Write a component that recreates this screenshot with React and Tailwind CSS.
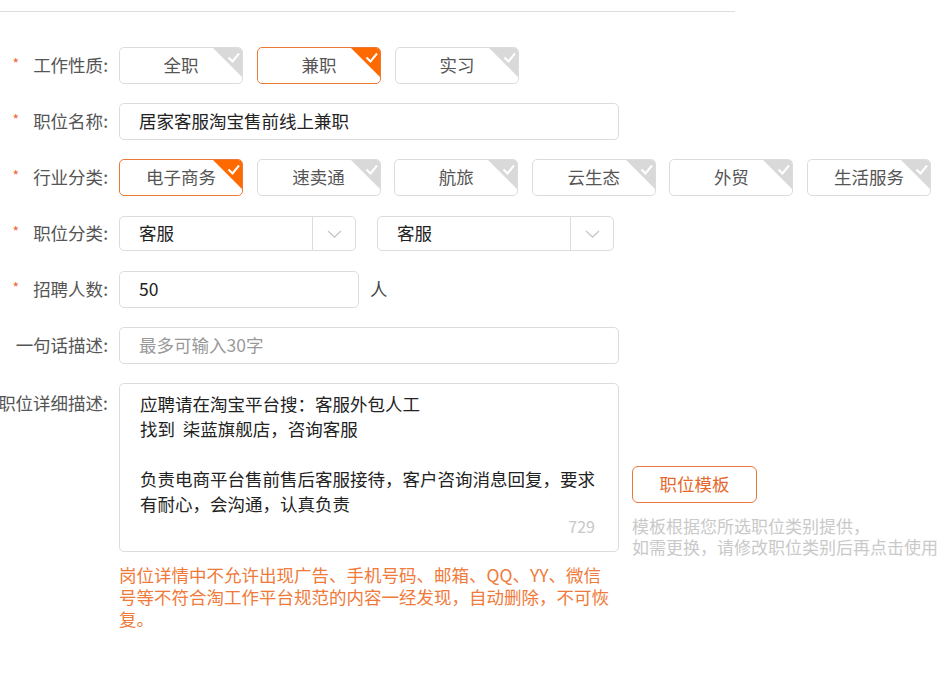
import { useState } from 'react';

const font = { fontFamily: '"Noto Sans CJK SC", "Noto Sans", sans-serif' };

const Corner = ({ active }) => (
  <svg width="29" height="29" viewBox="0 0 29 29" className="absolute top-0 right-0">
    <polygon points="0,0 29,0 29,29" fill={active ? '#ff6a00' : '#d9d9d9'} />
    <path d="M15.5 9.5 L19.5 13.5 L26 5.5" fill="none" stroke="#fff" strokeWidth="2" />
  </svg>
);

const Chip = ({ label, active, onClick }) => (
  <button
    onClick={onClick}
    className={`relative w-[124px] h-[37px] shrink-0 overflow-hidden rounded-[5px] border bg-white text-[17.5px] text-[#555] ${active ? 'border-[#ec7a35]' : 'border-[#dcdcdc]'}`}
  >
    {label}
    <Corner active={active} />
  </button>
);

const Label = ({ required, children }) => (
  <div className="w-[108px] shrink-0 flex items-center justify-end text-[17.5px] text-[#555] whitespace-nowrap">
    {required && <span className="text-[#f0673a] text-[14px] mr-[14px] -mt-1">*</span>}
    <span>{children}:</span>
  </div>
);

const Select = ({ value }) => (
  <div className="flex w-[237px] h-[35px] rounded-[5px] border border-[#dcdcdc] bg-white">
    <div className="flex-1 flex items-center pl-[19px] text-[17.5px] text-[#222]">{value}</div>
    <div className="w-[43px] border-l border-[#dcdcdc] flex items-center justify-center">
      <svg width="15" height="8" viewBox="0 0 15 8">
        <path d="M1 1 L7.5 7 L14 1" fill="none" stroke="#c8c8c8" strokeWidth="1.3" />
      </svg>
    </div>
  </div>
);

export default function App() {
  const [nature, setNature] = useState('兼职');
  const [industry, setIndustry] = useState('电子商务');

  const natures = ['全职', '兼职', '实习'];
  const industries = ['电子商务', '速卖通', '航旅', '云生态', '外贸', '生活服务'];

  return (
    <div className="w-[945px] h-[690px] bg-white overflow-hidden" style={font}>
      <div className="w-[735px] h-[12px] border-b border-[#dedede]" />

      <div className="flex flex-col gap-[19px] pt-[35px]">
        {/* 工作性质 */}
        <div className="flex items-center h-[37px] gap-[11px]">
          <Label required>工作性质</Label>
          <div className="flex gap-[14px]">
            {natures.map(n => (
              <Chip key={n} label={n} active={nature === n} onClick={() => setNature(n)} />
            ))}
          </div>
        </div>

        {/* 职位名称 */}
        <div className="flex items-center h-[37px] gap-[11px]">
          <Label required>职位名称</Label>
          <div className="w-[500px] h-[37px] rounded-[5px] border border-[#dcdcdc] flex items-center pl-[19px] text-[17.5px] text-[#222]">
            居家客服淘宝售前线上兼职
          </div>
        </div>

        {/* 行业分类 */}
        <div className="flex items-center h-[37px] gap-[11px]">
          <Label required>行业分类</Label>
          <div className="flex gap-[13.6px]">
            {industries.map(n => (
              <Chip key={n} label={n} active={industry === n} onClick={() => setIndustry(n)} />
            ))}
          </div>
        </div>

        {/* 职位分类 */}
        <div className="flex items-center h-[37px] gap-[11px]">
          <Label required>职位分类</Label>
          <div className="flex gap-[21px]">
            <Select value="客服" />
            <Select value="客服" />
          </div>
        </div>

        {/* 招聘人数 */}
        <div className="flex items-center h-[37px] gap-[11px]">
          <Label required>招聘人数</Label>
          <div className="w-[240px] h-[37px] rounded-[5px] border border-[#dcdcdc] flex items-center pl-[19px] text-[17.5px] text-[#222]">
            50
          </div>
          <span className="text-[17.5px] text-[#444]">人</span>
        </div>

        {/* 一句话描述 */}
        <div className="flex items-center h-[37px] gap-[11px]">
          <Label>一句话描述</Label>
          <div className="w-[500px] h-[37px] rounded-[5px] border border-[#dcdcdc] flex items-center pl-[19px] text-[17.5px] text-[#999]">
            最多可输入30字
          </div>
        </div>

        {/* 职位详细描述 */}
        <div className="flex gap-[11px]">
          <div className="w-[108px] shrink-0 flex justify-end pt-[7px] text-[17.5px] text-[#555] whitespace-nowrap">
            职位详细描述:
          </div>
          <div className="flex flex-col">
            <div className="flex items-start gap-[13px]">
              <div className="relative w-[500px] h-[169px] rounded-[5px] border border-[#dcdcdc] pl-[20px] pt-[7px] text-[17.5px] leading-[25px] text-[#222]">
                <p>应聘请在淘宝平台搜：客服外包人工</p>
                <p>找到&nbsp;&nbsp;柒蓝旗舰店，咨询客服</p>
                <p>&nbsp;</p>
                <p>负责电商平台售前售后客服接待，客户咨询消息回复，要求</p>
                <p>有耐心，会沟通，认真负责</p>
                <span className="absolute right-[23px] bottom-[12px] text-[16px] text-[#c8c8c8]">729</span>
              </div>
              <div className="flex flex-col pt-[83px]">
                <button className="w-[125px] h-[37px] rounded-[6px] border border-[#e8793a] text-[17.5px] text-[#e5692c]">
                  职位模板
                </button>
                <p className="mt-[12px] text-[17px] leading-[21px] text-[#c9c9c9] whitespace-nowrap">
                  模板根据您所选职位类别提供，
                  <br />
                  如需更换，请修改职位类别后再点击使用
                </p>
              </div>
            </div>
            <p className="mt-[7px] w-[496px] text-[17.5px] leading-[22px] text-[#f07a3a]">
              岗位详情中不允许出现广告、手机号码、邮箱、QQ、YY、微信号等不符合淘工作平台规范的内容一经发现，自动删除，不可恢复。
            </p>
          </div>
        </div>
      </div>
    </div>
  );
}
